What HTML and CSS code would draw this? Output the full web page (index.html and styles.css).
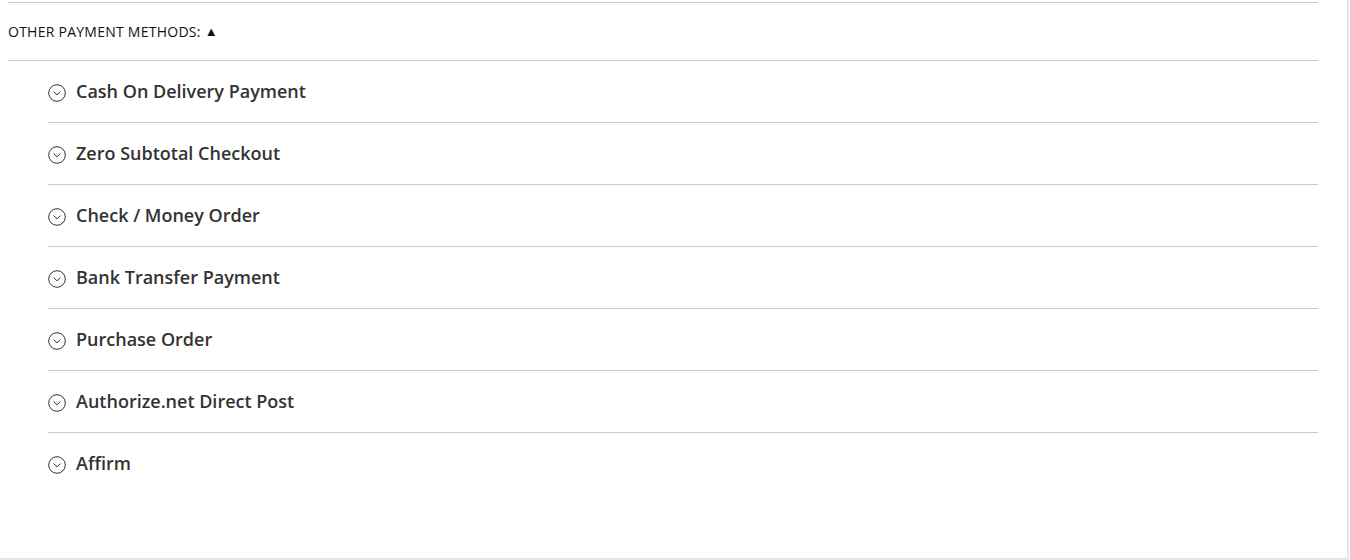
FILE: index.html
```html
<!DOCTYPE html>
<html lang="en">
<head>
<meta charset="utf-8">
<title>Other payment methods</title>
<link rel="stylesheet" href="styles.css">
</head>
<body>
<div class="panel">
  <div class="section">
    <div class="section-title">OTHER PAYMENT METHODS: <span class="caret">&#9650;</span></div>
    <ul class="methods">
      <li class="method"><svg class="icon" viewBox="0 0 18 18"><circle cx="9" cy="9" r="8.3"/><path d="M5.6 7.6 L9 10.8 L12.4 7.6"/></svg><span>Cash On Delivery Payment</span></li>
      <li class="method"><svg class="icon" viewBox="0 0 18 18"><circle cx="9" cy="9" r="8.3"/><path d="M5.6 7.6 L9 10.8 L12.4 7.6"/></svg><span>Zero Subtotal Checkout</span></li>
      <li class="method"><svg class="icon" viewBox="0 0 18 18"><circle cx="9" cy="9" r="8.3"/><path d="M5.6 7.6 L9 10.8 L12.4 7.6"/></svg><span>Check / Money Order</span></li>
      <li class="method"><svg class="icon" viewBox="0 0 18 18"><circle cx="9" cy="9" r="8.3"/><path d="M5.6 7.6 L9 10.8 L12.4 7.6"/></svg><span>Bank Transfer Payment</span></li>
      <li class="method"><svg class="icon" viewBox="0 0 18 18"><circle cx="9" cy="9" r="8.3"/><path d="M5.6 7.6 L9 10.8 L12.4 7.6"/></svg><span>Purchase Order</span></li>
      <li class="method"><svg class="icon" viewBox="0 0 18 18"><circle cx="9" cy="9" r="8.3"/><path d="M5.6 7.6 L9 10.8 L12.4 7.6"/></svg><span>Authorize.net Direct Post</span></li>
      <li class="method"><svg class="icon" viewBox="0 0 18 18"><circle cx="9" cy="9" r="8.3"/><path d="M5.6 7.6 L9 10.8 L12.4 7.6"/></svg><span>Affirm</span></li>
    </ul>
  </div>
</div>
</body>
</html>
```
FILE: styles.css
```css
html, body {
  margin: 0;
  padding: 0;
  background: #fff;
}
body {
  font-family: "Open Sans", "Noto Sans", sans-serif;
  color: #303030;
}
.panel {
  width: 1347px;
  height: 558px;
  border-right: 2px solid #e6e6e6;
  border-bottom: 2px solid #e6e6e6;
  box-sizing: content-box;
}
.section {
  margin: 0 29px 0 8px;
  padding-top: 2px;
}
.section-title {
  border-top: 1px solid #cccccc;
  border-bottom: 1px solid #cccccc;
  height: 57px;
  display: flex;
  align-items: center;
  font-size: 14px;
  color: #111;
  letter-spacing: 0.25px;
  box-sizing: content-box;
}
.caret {
  font-size: 13px;
  margin-left: 4px;
  position: relative;
  top: -1px;
}
.methods {
  list-style: none;
  margin: 0 0 0 40px;
  padding: 0;
}
.method {
  height: 62px;
  box-sizing: border-box;
  padding-bottom: 1px;
  border-bottom: 1px solid #cccccc;
  display: flex;
  align-items: center;
  gap: 10px;
  font-size: 18px;
  font-weight: 600;
  color: #333;
}
.method:last-child {
  border-bottom: none;
  padding-bottom: 2px;
}
.icon {
  width: 18px;
  height: 18px;
  flex: none;
  fill: none;
  stroke: #333;
  stroke-width: 1;
  position: relative;
  top: 2px;
}
```
